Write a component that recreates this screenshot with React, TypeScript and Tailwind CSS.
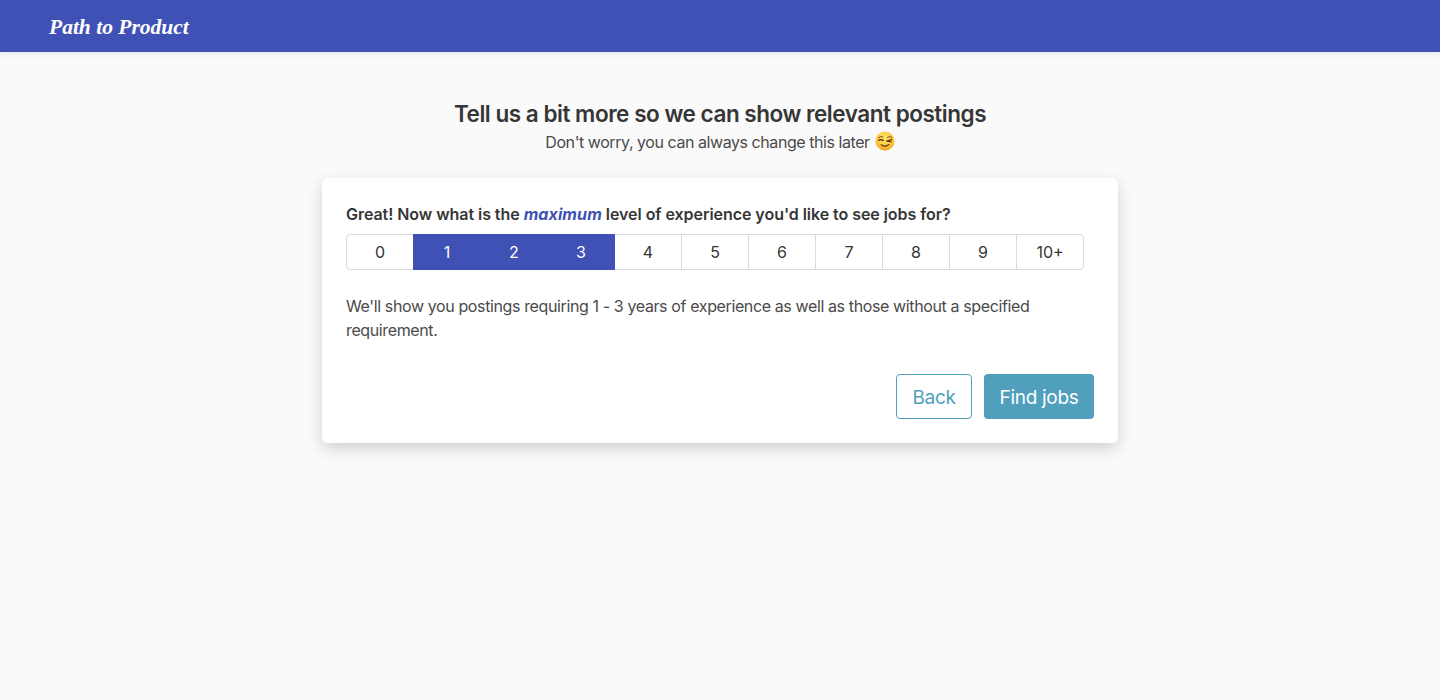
const YEARS = ["0", "1", "2", "3", "4", "5", "6", "7", "8", "9", "10+"];
const MIN = 1;
const MAX = 3;

function WinkEmoji() {
  return (
    <svg width="20" height="20" viewBox="0 0 20 20" className="inline-block ml-[5px] align-[-3px]">
      <defs>
        <radialGradient id="face" cx="50%" cy="35%" r="65%">
          <stop offset="0%" stopColor="#ffe26a" />
          <stop offset="70%" stopColor="#fdc83a" />
          <stop offset="100%" stopColor="#f29a1c" />
        </radialGradient>
      </defs>
      <circle cx="10" cy="10" r="9.5" fill="url(#face)" />
      <path d="M3.4 6.8 Q5.4 4.8 7.8 5.8" fill="none" stroke="#7a4a14" strokeWidth="1" strokeLinecap="round" />
      <path d="M12.4 6.4 Q14.8 4.6 17 6.4" fill="none" stroke="#7a4a14" strokeWidth="1" strokeLinecap="round" />
      <path d="M3.8 9.4 Q6 7.8 8.2 9.4" fill="none" stroke="#4a2a0c" strokeWidth="1.3" strokeLinecap="round" />
      <path d="M11.6 10 L16.6 8.6 M11.6 10 L16.4 11" fill="none" stroke="#4a2a0c" strokeWidth="1.2" strokeLinecap="round" />
      <path d="M6.2 13.8 Q10.2 16.8 14 13.6" fill="none" stroke="#6b3d10" strokeWidth="1.3" strokeLinecap="round" />
    </svg>
  );
}

export default function App() {
  return (
    <div className="min-h-[700px] bg-[#fafafa] font-['Inter',sans-serif] text-[#363636]">
      <header className="h-[52px] bg-[#3f51b5] pl-[49px] pt-[3px] flex items-center shadow-[0_2px_6px_rgba(0,0,0,0.08)]">
        <span className="font-['Liberation_Serif',serif] italic font-bold text-[21.5px] leading-none text-white">
          Path to Product
        </span>
      </header>

      <main className="flex flex-col items-center pt-[48px]">
        <h1 className="text-[22.5px] leading-[28px] font-semibold tracking-[-0.47px]">
          Tell us a bit more so we can show relevant postings
        </h1>
        <p className="mt-[2px] text-[16px] leading-[24px] text-[#4a4a4a] tracking-[-0.44px]">
          Don't worry, you can always change this later
          <WinkEmoji />
        </p>

        <section className="mt-[24px] w-[796px] h-[265px] bg-white rounded-[6px] p-[24px] shadow-[0_6px_16px_rgba(0,0,0,0.16)]">
          <p className="text-[16px] leading-[24px] font-semibold tracking-[-0.05px]">
            Great! Now what is the <em className="text-[#3f51b5] font-bold tracking-[0.1px]">maximum</em> level of experience you'd like to see jobs for?
          </p>

          <div className="flex h-[36px] mt-[8px]">
            {YEARS.map((year, i) => {
              const active = i >= MIN && i <= MAX;
              return (
                <div
                  key={year}
                  className={
                    active
                      ? "relative z-10 w-[68px] -ml-px flex items-center justify-center text-[16px] bg-[#3f51b5] border border-[#3f51b5] text-white"
                      : "w-[68px] -ml-px first:ml-0 flex items-center justify-center text-[16px] bg-white border border-[#dbdbdb] first:rounded-l-[4px] last:rounded-r-[4px]"
                  }
                >
                  {year}
                </div>
              );
            })}
          </div>

          <p className="mt-[24px] text-[16px] leading-[24px] text-[#4a4a4a] tracking-[-0.38px]">
            We'll show you postings requiring 1 - 3 years of experience as well as those without a specified requirement.
          </p>

          <div className="flex justify-end gap-[12px] mt-[32px]">
            <button className="w-[76px] h-[45px] pt-[3px] rounded-[4px] border border-[#4f9fbd] bg-white text-[#4f9fbd] text-[19px] tracking-[-0.3px]">
              Back
            </button>
            <button className="w-[110px] h-[45px] pt-[3px] rounded-[4px] bg-[#4f9fbd] text-white text-[19px] tracking-[-0.3px]">
              Find jobs
            </button>
          </div>
        </section>
      </main>
    </div>
  );
}
